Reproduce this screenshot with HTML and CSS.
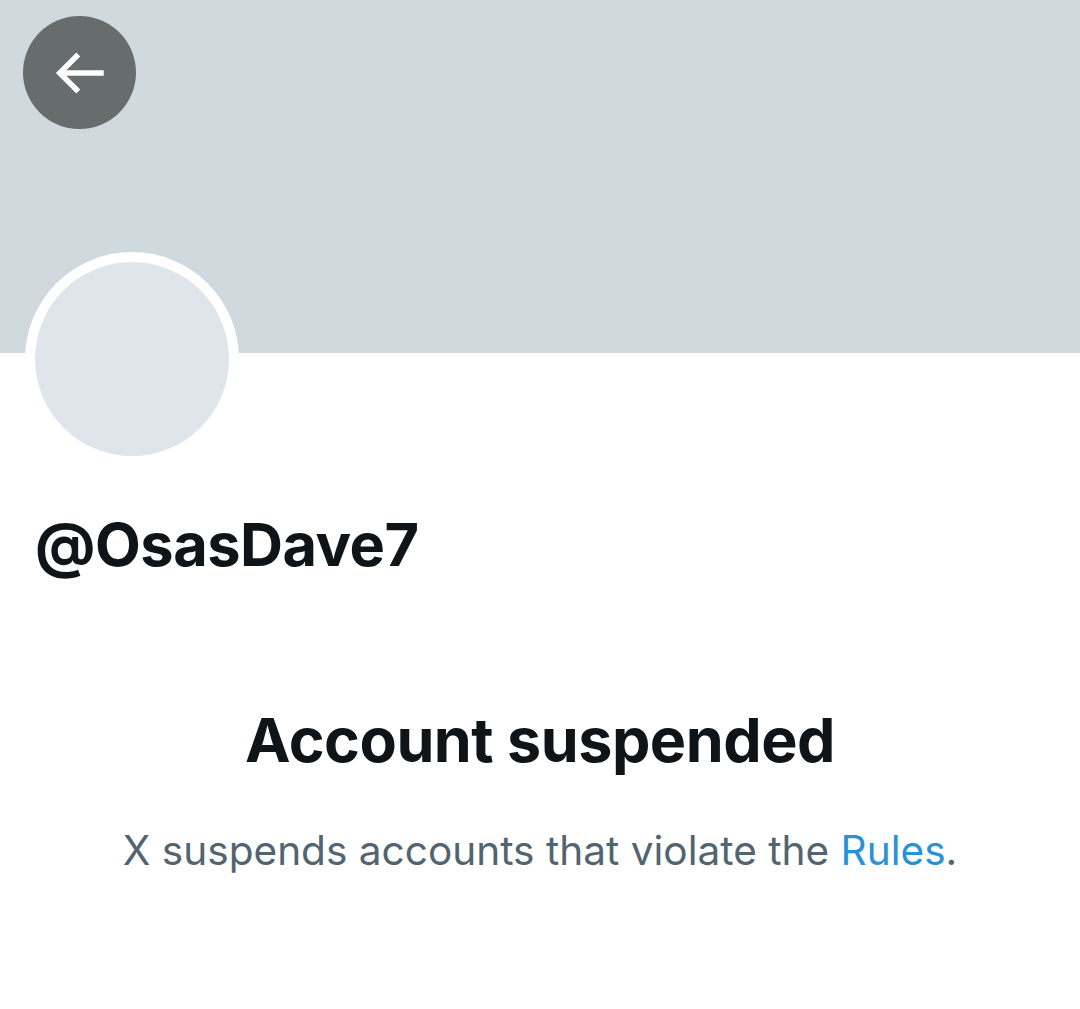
FILE: index.html
```html
<!DOCTYPE html>
<html>
<head>
<meta charset="utf-8">
<link rel="stylesheet" href="styles.css">
</head>
<body>
<div class="page">
  <header class="banner">
    <button class="back" aria-label="Back">
      <svg viewBox="0 0 24 24" width="66" height="66"><path d="M7.414 13l5.043 5.04-1.414 1.42L3.586 12l7.457-7.46 1.414 1.42L7.414 11H21v2H7.414z" fill="#fff"/></svg>
    </button>
  </header>
  <div class="avatar-row">
    <div class="avatar"><div class="avatar-inner"></div></div>
  </div>
  <h1 class="handle">@OsasDave7</h1>
  <section class="notice">
    <h2 class="notice-title">Account suspended</h2>
    <p class="notice-text">X suspends accounts that violate the <a class="link" href="#">Rules</a>.</p>
  </section>
</div>
</body>
</html>
```
FILE: styles.css
```css
* { box-sizing: border-box; }
html, body { margin: 0; padding: 0; background: #fff; }
body { font-family: "Inter", "Noto Sans", sans-serif; color: #0f1419; }
.page { width: 1080px; min-height: 1009px; overflow: hidden; }
.banner {
  height: 353px;
  background: #cfd9de;
  padding: 16px 0 0 23px;
}
.back {
  width: 113px; height: 113px;
  border-radius: 50%;
  border: none;
  background: #676c6d;
  display: flex; align-items: center; justify-content: center;
  padding: 0 2px 0 0;
}
.avatar-row {
  display: flex;
  height: 214px;
  margin-top: -101px;
  padding-left: 25px;
}
.avatar {
  width: 214px; height: 214px;
  border-radius: 50%;
  background: #fff;
  padding: 10px;
}
.avatar-inner { width: 100%; height: 100%; border-radius: 50%; background: #dfe5ea; }
.handle {
  margin: 42px 0 0 35px;
  font-size: 59.5px;
  font-weight: 700;
  letter-spacing: -0.5px;
  line-height: 72px;
}
.notice { text-align: center; margin-top: 122px; }
.notice-title {
  margin: 0;
  font-size: 61px;
  font-weight: 700;
  line-height: 76px;
  letter-spacing: -0.5px;
}
.notice-text {
  margin: 47px 0 0;
  font-size: 40.6px;
  line-height: 52px;
  color: #536471;
  font-weight: 400;
}
.link { color: #2a91d6; text-decoration: none; }
```
